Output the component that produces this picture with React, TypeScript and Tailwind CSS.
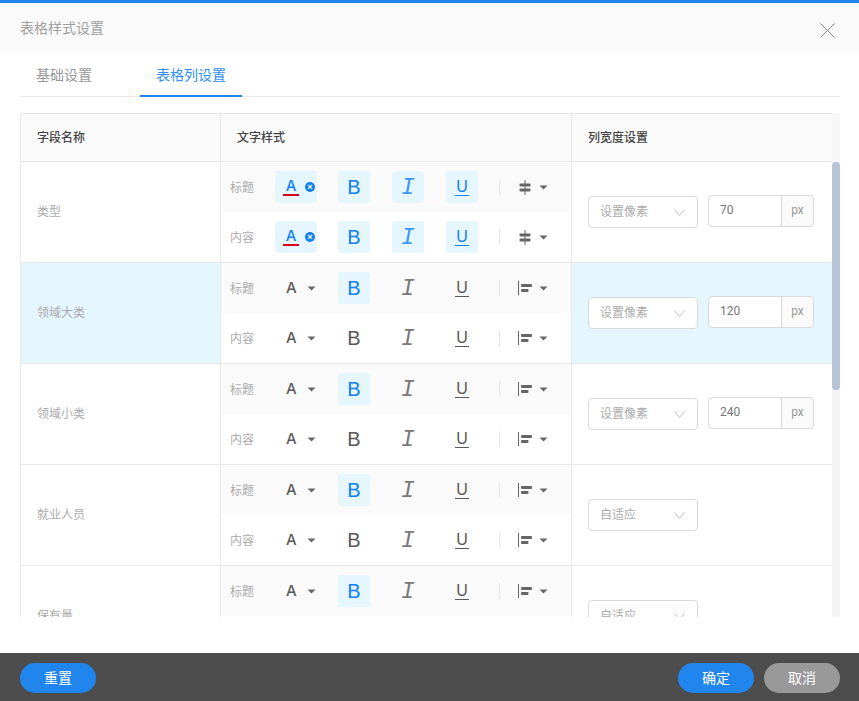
import { ReactNode } from "react";

const font = "font-['Roboto','Noto_Sans_CJK_SC',sans-serif]";

type Align = "center" | "left";

interface ILine {
    color?: boolean;
    bold?: boolean;
    italic?: boolean;
    underline?: boolean;
    align: Align;
}

interface IRow {
    name: string;
    active?: boolean;
    select: string;
    width?: string;
    title: ILine;
    content: ILine;
}

const rows: IRow[] = [
    {
        name: "类型",
        select: "设置像素",
        width: "70",
        title: { color: true, bold: true, italic: true, underline: true, align: "center" },
        content: { color: true, bold: true, italic: true, underline: true, align: "center" },
    },
    {
        name: "领域大类",
        active: true,
        select: "设置像素",
        width: "120",
        title: { bold: true, align: "left" },
        content: { align: "left" },
    },
    {
        name: "领域小类",
        select: "设置像素",
        width: "240",
        title: { bold: true, align: "left" },
        content: { align: "left" },
    },
    {
        name: "就业人员",
        select: "自适应",
        title: { bold: true, align: "left" },
        content: { align: "left" },
    },
    {
        name: "保有量",
        select: "自适应",
        title: { bold: true, align: "left" },
        content: { align: "left" },
    },
];

const Caret = () => (
    <svg width="9" height="5" viewBox="0 0 9 5" className="shrink-0">
        <path d="M0.5 0.5h8L4.5 4.5z" fill="#666" />
    </svg>
);

const AlignIcon = ({ type }: { type: Align }) =>
    type === "center" ? (
        <svg width="12" height="15" viewBox="0 0 12 15" className="ml-px">
            <rect x="5.25" y="0" width="1.5" height="15" fill="#999" />
            <rect x="0.5" y="3.5" width="11" height="3" rx="1" fill="#666" />
            <rect x="0.5" y="8.5" width="11" height="3" rx="1" fill="#666" />
        </svg>
    ) : (
        <svg width="14" height="14" viewBox="0 0 14 14">
            <rect x="0" y="0" width="1" height="14" fill="#666" />
            <rect x="3" y="3" width="11" height="3" rx="1" fill="#666" />
            <rect x="3" y="8" width="7.5" height="3" rx="1" fill="#666" />
        </svg>
    );

const ToolBtn = ({ on, children }: { on?: boolean; children: ReactNode }) => (
    <div className={`w-8 h-8 rounded-[3px] flex items-center justify-center ${on ? "bg-[#e6f6ff] text-[#1080f5]" : "text-[#595959]"}`}>
        {children}
    </div>
);

const StyleLine = ({ label, line, shaded }: { label: string; line: ILine; shaded?: boolean }) => (
    <div className={`h-[50px] flex items-center pl-[9px] ${shaded ? "bg-[#fafafa]" : "bg-white"}`}>
        <span className="w-[45px] pt-[2px] text-xs text-[#ababab]">{label}</span>
        {line.color ? (
            <div className="w-[42px] h-8 rounded-[3px] bg-[#e6f6ff] flex items-center pl-2 gap-[6px]">
                <span className="w-4 h-[18px] border-b-2 border-[#d9001b] text-[15px] leading-[16px] text-center font-medium text-[#1080f5] font-['Inter',sans-serif]">A</span>
                <span className="w-[10px] h-[10px] rounded-full bg-[#1080f5] text-white text-[9px] font-bold leading-[10px] text-center font-['Liberation_Sans',sans-serif]">×</span>
            </div>
        ) : (
            <div className="w-[42px] h-8 flex items-center pl-[11px] gap-[10px] text-[#595959]">
                <span className="text-[15px] leading-none font-medium mb-[2px] font-['Inter',sans-serif]">A</span>
                <Caret />
            </div>
        )}
        <div className="ml-[21px]">
            <ToolBtn on={line.bold}>
                <span className="text-[20px] leading-none font-['Liberation_Sans',sans-serif]">B</span>
            </ToolBtn>
        </div>
        <div className="ml-[22px]">
            <ToolBtn on={line.italic}>
                <span className="text-[23px] leading-none italic opacity-80 mt-[3px] font-['Liberation_Mono',monospace]">I</span>
            </ToolBtn>
        </div>
        <div className="ml-[22px]">
            <ToolBtn on={line.underline}>
                <span className="text-[16px] leading-[17px] border-b border-current px-px font-['Liberation_Sans',sans-serif]">U</span>
            </ToolBtn>
        </div>
        <div className="ml-[21px] w-px h-4 bg-[#e4e4e4]" />
        <div className="ml-[18px] w-[30px] flex items-center justify-between">
            <AlignIcon type={line.align} />
            <Caret />
        </div>
    </div>
);

const Select = ({ value }: { value: string }) => (
    <div className="w-[110px] h-8 rounded-[4px] border border-[#d9d9d9] bg-white flex items-center justify-between pl-[11px] pr-[12px] text-xs text-[#ababab]">
        <span>{value}</span>
        <svg width="11" height="7" viewBox="0 0 11 7">
            <path d="M0.5 0.5L5.5 6.5L10.5 0.5" fill="none" stroke="#bfbfbf" />
        </svg>
    </div>
);

const Row = ({ row }: { row: IRow }) => (
    <div className={`grid grid-cols-[200px_351px_1fr] h-[101px] border-b border-[#e8e8e8] ${row.active ? "bg-[#e6f6ff]" : "bg-white"}`}>
        <div className="border-l border-[#e8e8e8] flex items-center pl-4 text-xs text-[#ababab]">{row.name}</div>
        <div className="border-l border-[#e8e8e8]">
            <StyleLine label="标题" line={row.title} shaded />
            <StyleLine label="内容" line={row.content} />
        </div>
        <div className="border-l border-[#e8e8e8] flex items-center pl-4 gap-[10px]">
            <Select value={row.select} />
            {row.width && (
                <div className="w-[106px] h-8 rounded-[4px] border border-[#d9d9d9] flex bg-white text-xs mb-[2px]">
                    <span className="flex-1 pl-[11px] leading-[28px] text-[#777]">{row.width}</span>
                    <span className="w-8 border-l border-[#d9d9d9] bg-[#fafafa] rounded-r-[4px] text-center leading-[28px] text-[#999]">px</span>
                </div>
            )}
        </div>
    </div>
);

const Pill = ({ text, gray }: { text: string; gray?: boolean }) => (
    <button className={`w-[76px] h-[30px] rounded-full text-sm text-white ${gray ? "bg-[#999999]" : "bg-[#2086ee]"}`}>{text}</button>
);

const App = () => {
    return (
        <div className={`w-[859px] h-[701px] bg-white flex flex-col overflow-hidden border-t-[3px] border-[#2086ee] ${font}`}>
            <div className="h-[50px] shrink-0 bg-[#fafafa] flex items-center justify-between pl-5 pr-6">
                <span className="text-sm text-[#a0a0a0]">表格样式设置</span>
                <svg width="15" height="15" viewBox="0 0 15 15" className="mt-[5px]">
                    <path d="M0.5 0.5L14.5 14.5M14.5 0.5L0.5 14.5" stroke="#777" strokeWidth="0.9" fill="none" />
                </svg>
            </div>

            <div className="ml-5 mr-[19px] h-[44px] shrink-0 border-b border-[#e8e8e8] flex text-sm">
                <div className="w-[120px] pl-4 pt-[12px] text-[#999]">基础设置</div>
                <div className="w-[102px] h-[44px] text-center pt-[12px] text-[#2f8ff0] border-b-2 border-[#2086ee]">表格列设置</div>
            </div>

            <div className="ml-5 mr-[19px] mt-4 h-[504px] shrink-0 flex overflow-hidden">
                <div className="w-[812px] shrink-0">
                    <div className="grid grid-cols-[199px_351px_1fr] h-[49px] bg-[#fafafa] border border-[#e8e8e8] border-r-0 rounded-tl-[3px] text-xs font-medium text-[#444]">
                        <div className="pl-4 flex items-center">字段名称</div>
                        <div className="pl-4 flex items-center border-l border-[#e8e8e8]">文字样式</div>
                        <div className="pl-4 flex items-center border-l border-[#e8e8e8]">列宽度设置</div>
                    </div>
                    {rows.map((row) => (
                        <Row key={row.name} row={row} />
                    ))}
                </div>
                <div className="w-2 shrink-0 bg-[#f3f3f3] rounded-b-[3px] flex flex-col">
                    <div className="h-[49px] shrink-0 bg-[#f7f7f7]" />
                    <div className="h-[228px] shrink-0 rounded-[4px] bg-[#b9c3d6]" />
                </div>
            </div>

            <div className="mt-auto h-[48px] shrink-0 bg-[#4d4d4d] flex items-center justify-between pl-5 pr-[19px] pt-[2px]">
                <Pill text="重置" />
                <div className="flex gap-[10px]">
                    <Pill text="确定" />
                    <Pill text="取消" gray />
                </div>
            </div>
        </div>
    )
}

export default App
